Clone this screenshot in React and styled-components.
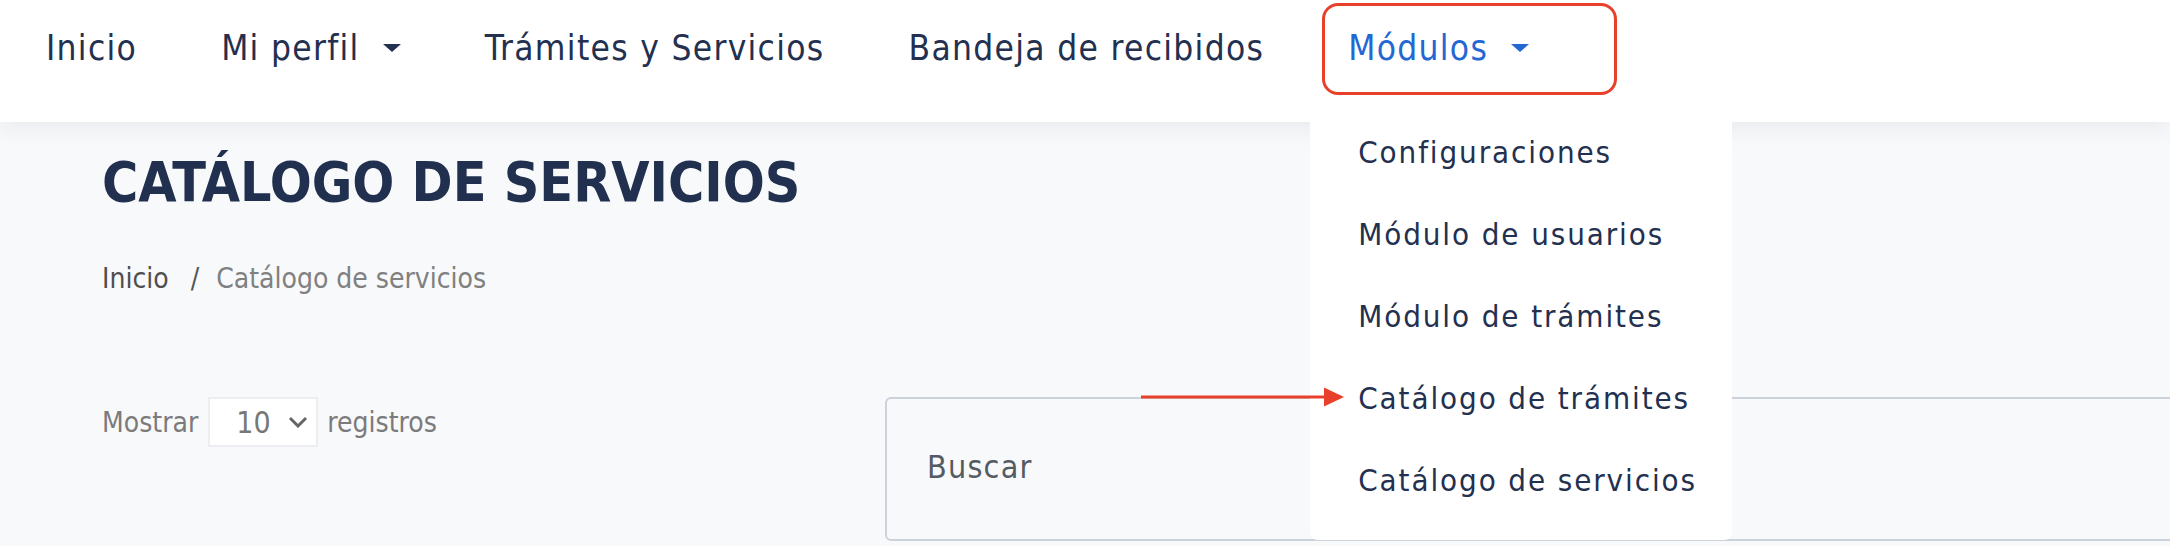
import React from "react";
import styled, { createGlobalStyle } from "styled-components";

const GlobalStyle = createGlobalStyle`
  html, body {
    margin: 0;
    padding: 0;
    background: #f8f9fb;
    overflow: hidden;
  }
  body {
    font-family: "DejaVu Sans Condensed", "DejaVu Sans", "Noto Sans", sans-serif;
  }
  * { box-sizing: border-box; }
`;

const Page = styled.div`
  width: 2170px;
  height: 546px;
  overflow: hidden;
  background: #f8f9fb;
`;

const Header = styled.header`
  position: relative;
  z-index: 5;
  height: 122px;
  background: #ffffff;
  box-shadow: 0 6px 22px rgba(30, 40, 60, 0.07);
`;

const Nav = styled.nav`
  display: flex;
  align-items: center;
  height: 96px;
  padding-left: 4px;
`;

const NavItem = styled.div`
  position: relative;
  display: flex;
  align-items: center;
  height: 100%;
  padding: 0 42px;
  font-size: 35px;
  letter-spacing: 1.3px;
  color: ${(p) => (p.$active ? "#2467d3" : "#23304f")};
  white-space: nowrap;
`;

const Caret = styled.span`
  display: inline-block;
  margin-left: 23px;
  width: 0;
  height: 0;
  border-left: 9.5px solid transparent;
  border-right: 9.5px solid transparent;
  border-top: 8px solid currentColor;
`;

const Highlight = styled.div`
  position: absolute;
  left: 16px;
  top: 3px;
  width: 295px;
  height: 92px;
  border: 3px solid #e8402a;
  border-radius: 16px;
  pointer-events: none;
`;

const Dropdown = styled.ul`
  position: absolute;
  left: 4px;
  top: 122px;
  width: 422px;
  margin: 0;
  padding: 0 0 8px 0;
  list-style: none;
  background: #ffffff;
  border-radius: 0 0 8px 8px;
`;

const DropItem = styled.li`
  position: relative;
  height: 82px;
  padding: 10px 0 0 48px;
  font-size: 31px;
  line-height: 40px;
  letter-spacing: 1.9px;
  color: #23304f;
`;

const Arrow = styled.svg`
  position: absolute;
  left: -169px;
  top: 18px;
`;

const Main = styled.main`
  position: relative;
  z-index: 1;
  padding-left: 102px;
`;

const Title = styled.h1`
  margin: 0;
  padding-top: 30px;
  font-size: 55px;
  line-height: 60px;
  font-weight: 700;
  letter-spacing: 0;
  color: #22304f;
`;

const Breadcrumb = styled.div`
  display: flex;
  align-items: baseline;
  margin-top: 49px;
  font-size: 28px;
  line-height: 36px;
`;

const Crumb = styled.span`
  color: ${(p) => (p.$home ? "#4f4f4f" : "#808080")};
`;

const Sep = styled.span`
  margin: 0 17px 0 22px;
  color: #555;
`;

const Controls = styled.div`
  display: grid;
  grid-template-columns: 783px 1400px;
  align-items: start;
  margin-top: 100px;
`;

const Length = styled.div`
  display: flex;
  align-items: center;
  height: 50px;
  font-size: 28px;
  color: #7b7b7b;
`;

const Select = styled.div`
  display: flex;
  align-items: center;
  justify-content: space-between;
  width: 110px;
  height: 50px;
  margin: 0 9px 0 10px;
  padding: 0 8px 0 26px;
  background: #ffffff;
  border: 2px solid #eceef1;
  font-size: 30px;
  color: #777;
`;

const Search = styled.div`
  height: 144px;
  border: 2px solid #ccd2d9;
  border-radius: 6px;
  background: #f8f9fb;
  padding: 48px 0 0 40px;
  font-size: 32px;
  line-height: 40px;
  letter-spacing: 1.2px;
  color: #555b62;
`;

const items = [
  "Configuraciones",
  "Módulo de usuarios",
  "Módulo de trámites",
  "Catálogo de trámites",
  "Catálogo de servicios",
];

export default function App() {
  return (
    <Page>
      <GlobalStyle />
      <Header>
        <Nav>
          <NavItem>Inicio</NavItem>
          <NavItem>
            Mi perfil
            <Caret />
          </NavItem>
          <NavItem>Trámites y Servicios</NavItem>
          <NavItem>Bandeja de recibidos</NavItem>
          <NavItem $active>
            Módulos
            <Caret />
            <Highlight />
            <Dropdown>
              {items.map((t, i) => (
                <DropItem key={t}>
                  {i === 3 && (
                    <Arrow width="203" height="22" viewBox="0 0 203 22">
                      <rect x="0" y="9.5" width="186" height="3" fill="#e8402a" />
                      <polygon points="183,1.5 203,11 183,20.5" fill="#e8402a" />
                    </Arrow>
                  )}
                  {t}
                </DropItem>
              ))}
            </Dropdown>
          </NavItem>
        </Nav>
      </Header>
      <Main>
        <Title>CATÁLOGO DE SERVICIOS</Title>
        <Breadcrumb>
          <Crumb $home>Inicio</Crumb>
          <Sep>/</Sep>
          <Crumb>Catálogo de servicios</Crumb>
        </Breadcrumb>
        <Controls>
          <Length>
            Mostrar
            <Select>
              10
              <svg width="20" height="12" viewBox="0 0 20 12">
                <polyline points="2,2 10,10 18,2" fill="none" stroke="#666" strokeWidth="3" />
              </svg>
            </Select>
            registros
          </Length>
          <Search>Buscar</Search>
        </Controls>
      </Main>
    </Page>
  );
}
